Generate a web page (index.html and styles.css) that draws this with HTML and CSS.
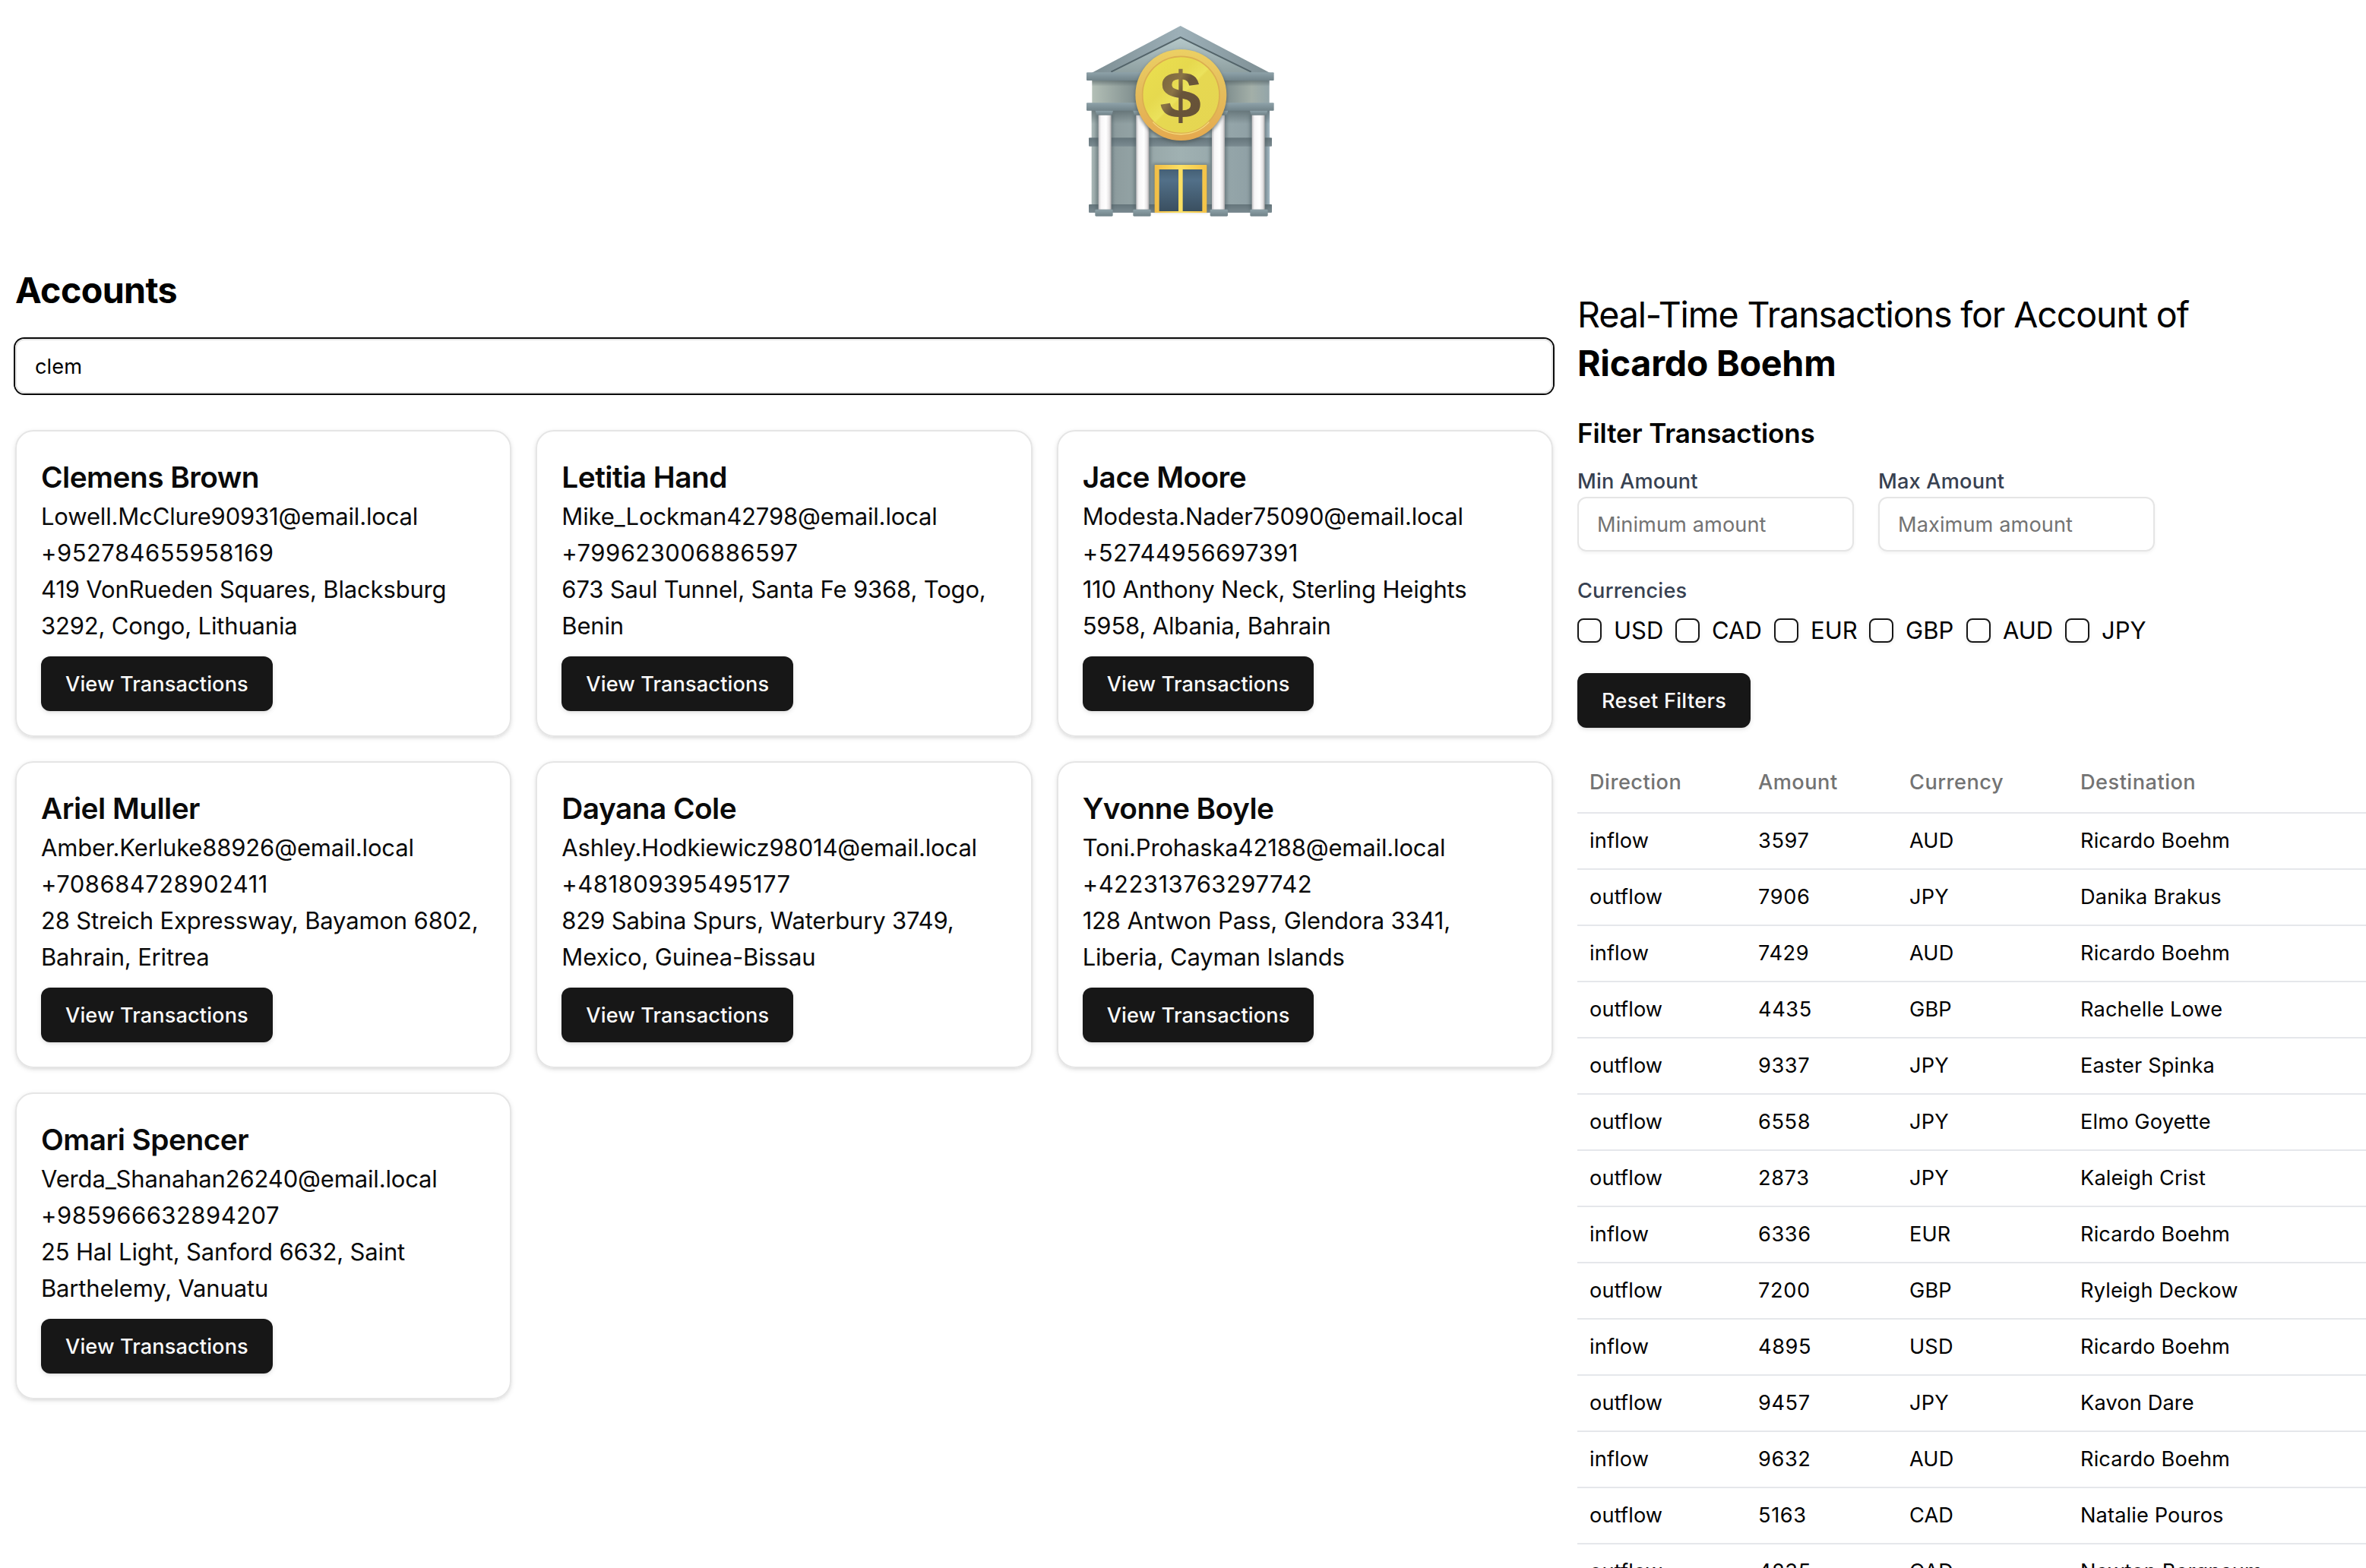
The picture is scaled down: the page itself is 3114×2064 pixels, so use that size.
FILE: index.html
```
<!DOCTYPE html>
<html lang="en">
<head>
<meta charset="utf-8">
<title>Accounts</title>
<link rel="stylesheet" href="styles.css">
</head>
<body>
<header class="hero">
  <svg class="bank" viewBox="81 30 760 780" role="img" aria-label="Bank">
    <defs>
      <linearGradient id="wall" x1="0" x2="1" y1="0" y2="0"><stop offset="0" stop-color="#a7b5b4"/><stop offset=".12" stop-color="#8d9c9e"/><stop offset=".5" stop-color="#a0b1b2"/><stop offset=".9" stop-color="#8fa0a5"/><stop offset="1" stop-color="#a2b7c2"/></linearGradient>
      <linearGradient id="frieze" x1="0" x2="1" y1="0" y2="0"><stop offset="0" stop-color="#b3bfb6"/><stop offset=".25" stop-color="#7f8e8e"/><stop offset=".75" stop-color="#7f8e8e"/><stop offset=".9" stop-color="#a3afa8"/><stop offset="1" stop-color="#93a5a9"/></linearGradient>
      <linearGradient id="shade" x1="0" x2="0" y1="0" y2="1"><stop offset="0" stop-color="#4d5c60" stop-opacity=".65"/><stop offset=".5" stop-color="#4d5c60" stop-opacity="0"/></linearGradient>
      <linearGradient id="ledge" x1="0" x2="0" y1="0" y2="1"><stop offset="0" stop-color="#8ea2a9"/><stop offset="1" stop-color="#718389"/></linearGradient>
      <linearGradient id="band" x1="0" x2="0" y1="0" y2="1"><stop offset="0" stop-color="#65757b"/><stop offset="1" stop-color="#7b8b91"/></linearGradient>
      <linearGradient id="roof" x1="0" x2="1" y1="0" y2="0"><stop offset="0" stop-color="#7d8e93"/><stop offset=".5" stop-color="#9db0b8"/><stop offset="1" stop-color="#7d8e93"/></linearGradient>
      <linearGradient id="gable" x1="0" x2="0" y1="0" y2="1"><stop offset="0" stop-color="#b6c9cb"/><stop offset="1" stop-color="#8fa0a1"/></linearGradient>
      <linearGradient id="column" x1="0" x2="1" y1="0" y2="0"><stop offset="0" stop-color="#c4c2c4"/><stop offset=".2" stop-color="#f7f6f7"/><stop offset=".6" stop-color="#ffffff"/><stop offset=".85" stop-color="#e3e1e2"/><stop offset="1" stop-color="#a9a7a8"/></linearGradient>
      <linearGradient id="rim" x1="0" x2="0" y1="0" y2="1"><stop offset="0" stop-color="#ecd063"/><stop offset=".45" stop-color="#e5bd5c"/><stop offset="1" stop-color="#e5a94f"/></linearGradient>
      <linearGradient id="face" x1="0" x2="1" y1="0" y2="1"><stop offset="0" stop-color="#ebe04f"/><stop offset=".35" stop-color="#e6d94e"/><stop offset=".5" stop-color="#ebe25c"/><stop offset=".52" stop-color="#e6d851"/><stop offset="1" stop-color="#e5d552"/></linearGradient>
      <linearGradient id="dollar" x1="0" x2="1" y1="0" y2="1"><stop offset="0" stop-color="#745f37"/><stop offset=".38" stop-color="#8a7446"/><stop offset=".5" stop-color="#69553a"/><stop offset="1" stop-color="#655136"/></linearGradient>
      <linearGradient id="frame" x1="0" x2="1" y1="0" y2="0"><stop offset="0" stop-color="#f2bd45"/><stop offset=".5" stop-color="#fbe063"/><stop offset="1" stop-color="#f4c247"/></linearGradient>
      <linearGradient id="glass" x1="0" x2="0" y1="0" y2="1"><stop offset="0" stop-color="#456075"/><stop offset=".25" stop-color="#527089"/><stop offset="1" stop-color="#3a4f60"/></linearGradient>
      <filter id="soft" x="-20%" y="-20%" width="140%" height="140%"><feGaussianBlur stdDeviation="7"/></filter>
    </defs>
    <path d="M110 228 461 42 815 228Z" fill="url(#roof)"/>
    <path d="M185 226 461 86 742 226Z" fill="url(#gable)"/>
    <path d="M187 224 461 87 740 224" fill="none" stroke="#53646a" stroke-width="6"/>
    <rect x="112" y="250" width="700" height="110" fill="url(#frieze)"/>
    <rect x="112" y="256" width="700" height="50" fill="url(#shade)"/>
    <rect x="110" y="374" width="703" height="406" fill="url(#wall)"/>
    <rect x="110" y="374" width="703" height="110" fill="url(#shade)"/>
    <rect x="99" y="484" width="723" height="34" rx="3" fill="url(#band)"/>
    <rect x="99" y="747" width="723" height="33" rx="3" fill="url(#band)"/>
    <g fill="#4c5b60" opacity=".55" filter="url(#soft)">
      <rect x="128" y="390" width="66" height="380"/><rect x="278" y="390" width="66" height="380"/>
      <rect x="578" y="390" width="66" height="380"/><rect x="735" y="390" width="66" height="380"/>
      <rect x="352" y="586" width="220" height="190"/>
    </g>
    <rect x="90" y="226" width="740" height="32" rx="3" fill="url(#ledge)"/>
    <rect x="90" y="346" width="740" height="31" rx="3" fill="url(#ledge)"/>
    <g fill="url(#ledge)">
      <path d="M125 377h70l-5 17h-60zM274 377h70l-5 17h-60zM579 377h70l-5 17h-60zM735 377h70l-5 17h-60z"/>
      <rect x="124" y="767" width="70" height="27" rx="4"/><rect x="274" y="767" width="70" height="27" rx="4"/>
      <rect x="578" y="767" width="70" height="27" rx="4"/><rect x="736" y="767" width="70" height="27" rx="4"/>
    </g>
    <rect x="137" y="395" width="51" height="372" fill="url(#column)"/>
    <rect x="286" y="395" width="51" height="372" fill="url(#column)"/>
    <rect x="585" y="395" width="51" height="372" fill="url(#column)"/>
    <rect x="743" y="395" width="51" height="372" fill="url(#column)"/>
    <rect x="359" y="591" width="206" height="189" rx="2" fill="url(#frame)"/>
    <rect x="377" y="609" width="76" height="165" fill="url(#glass)"/>
    <rect x="470" y="609" width="77" height="165" fill="url(#glass)"/>
    <circle cx="463" cy="322" r="181" fill="#4d5858" opacity=".7" filter="url(#soft)"/>
    <circle cx="463" cy="315" r="180" fill="url(#rim)"/>
    <circle cx="463" cy="315" r="152" fill="url(#face)" stroke="#dcae50" stroke-width="5"/>
    <path d="M352 422A152 152 0 0 0 574 422" fill="none" stroke="#f6dc7c" stroke-width="4"/>
    <text class="bank-sign" transform="translate(461 407) scale(1.13 1)" text-anchor="middle" fill="url(#dollar)">$</text>
  </svg>
</header>
<main class="layout">
  <section class="accounts">
    <h1 class="accounts-title">Accounts</h1>
    <input class="field search" type="text" value="clem" aria-label="Search accounts">
    <div class="cards">
      <article class="card"><h2 class="name">Clemens Brown</h2><p>Lowell.McClure90931@email.local</p><p class="phone">+952784655958169</p><p>419 VonRueden Squares, Blacksburg 3292, Congo, Lithuania</p><button class="btn">View Transactions</button></article>
      <article class="card"><h2 class="name">Letitia Hand</h2><p>Mike_Lockman42798@email.local</p><p class="phone">+799623006886597</p><p>673 Saul Tunnel, Santa Fe 9368, Togo, Benin</p><button class="btn">View Transactions</button></article>
      <article class="card"><h2 class="name">Jace Moore</h2><p>Modesta.Nader75090@email.local</p><p class="phone">+52744956697391</p><p>110 Anthony Neck, Sterling Heights 5958, Albania, Bahrain</p><button class="btn">View Transactions</button></article>
      <article class="card"><h2 class="name">Ariel Muller</h2><p>Amber.Kerluke88926@email.local</p><p class="phone">+708684728902411</p><p>28 Streich Expressway, Bayamon 6802, Bahrain, Eritrea</p><button class="btn">View Transactions</button></article>
      <article class="card"><h2 class="name">Dayana Cole</h2><p>Ashley.Hodkiewicz98014@email.local</p><p class="phone">+481809395495177</p><p>829 Sabina Spurs, Waterbury 3749, Mexico, Guinea-Bissau</p><button class="btn">View Transactions</button></article>
      <article class="card"><h2 class="name">Yvonne Boyle</h2><p>Toni.Prohaska42188@email.local</p><p class="phone">+422313763297742</p><p>128 Antwon Pass, Glendora 3341, Liberia, Cayman Islands</p><button class="btn">View Transactions</button></article>
      <article class="card"><h2 class="name">Omari Spencer</h2><p>Verda_Shanahan26240@email.local</p><p class="phone">+985966632894207</p><p>25 Hal Light, Sanford 6632, Saint Barthelemy, Vanuatu</p><button class="btn">View Transactions</button></article>
    </div>
  </section>
  <section class="transactions">
    <h2 class="heading">Real-Time Transactions for Account of<br><strong>Ricardo Boehm</strong></h2>
    <h3 class="subheading">Filter Transactions</h3>
    <div class="amounts">
      <label class="label">Min Amount<input class="field" type="text" placeholder="Minimum amount"></label>
      <label class="label">Max Amount<input class="field" type="text" placeholder="Maximum amount"></label>
    </div>
    <div class="label">Currencies</div>
    <div class="currencies">
      <label class="currency"><span class="box"></span>USD</label>
      <label class="currency"><span class="box"></span>CAD</label>
      <label class="currency"><span class="box"></span>EUR</label>
      <label class="currency"><span class="box"></span>GBP</label>
      <label class="currency"><span class="box"></span>AUD</label>
      <label class="currency"><span class="box"></span>JPY</label>
    </div>
    <button class="btn btn-reset">Reset Filters</button>
    <table class="table">
      <colgroup><col class="c-dir"><col class="c-amt"><col class="c-cur"><col></colgroup>
      <thead><tr><th>Direction</th><th>Amount</th><th>Currency</th><th>Destination</th></tr></thead>
      <tbody>
        <tr><td>inflow</td><td>3597</td><td>AUD</td><td>Ricardo Boehm</td></tr>
        <tr><td>outflow</td><td>7906</td><td>JPY</td><td>Danika Brakus</td></tr>
        <tr><td>inflow</td><td>7429</td><td>AUD</td><td>Ricardo Boehm</td></tr>
        <tr><td>outflow</td><td>4435</td><td>GBP</td><td>Rachelle Lowe</td></tr>
        <tr><td>outflow</td><td>9337</td><td>JPY</td><td>Easter Spinka</td></tr>
        <tr><td>outflow</td><td>6558</td><td>JPY</td><td>Elmo Goyette</td></tr>
        <tr><td>outflow</td><td>2873</td><td>JPY</td><td>Kaleigh Crist</td></tr>
        <tr><td>inflow</td><td>6336</td><td>EUR</td><td>Ricardo Boehm</td></tr>
        <tr><td>outflow</td><td>7200</td><td>GBP</td><td>Ryleigh Deckow</td></tr>
        <tr><td>inflow</td><td>4895</td><td>USD</td><td>Ricardo Boehm</td></tr>
        <tr><td>outflow</td><td>9457</td><td>JPY</td><td>Kavon Dare</td></tr>
        <tr><td>inflow</td><td>9632</td><td>AUD</td><td>Ricardo Boehm</td></tr>
        <tr><td>outflow</td><td>5163</td><td>CAD</td><td>Natalie Pouros</td></tr>
        <tr><td>outflow</td><td>4235</td><td>CAD</td><td>Newton Bergnaum</td></tr>
      </tbody>
    </table>
  </section>
</main>
</body>
</html>
```
FILE: styles.css
```
* { box-sizing: border-box; margin: 0; padding: 0; }
html, body { height: 2064px; overflow: hidden; }
body {
  background: #fff;
  color: #000;
  font-family: Inter, "Liberation Sans", sans-serif;
  font-size: 31px;
  line-height: 48px;
}

.hero { display: flex; justify-content: center; height: 350px; padding: 30px 6px 0 0; }
.bank { width: 253.33px; height: 260px; }
.bank-sign { font: 700 262px "Liberation Sans", Arial, sans-serif; }

.layout { display: grid; grid-template-columns: 2024px 1fr; column-gap: 32px; padding-left: 20px; }

.accounts-title { font-size: 46.6px; line-height: 64px; font-weight: 700; letter-spacing: -.61px; margin-bottom: 32px; }

.field {
  display: block;
  width: 100%;
  height: 72px;
  padding: 0 24px;
  border: 2px solid #e5e5e5;
  border-radius: 12px;
  background: transparent;
  box-shadow: 0 2px 4px rgba(0, 0, 0, .05);
  color: #000;
  font: 400 27.2px Inter, "Liberation Sans", sans-serif;
  letter-spacing: .07px;
  outline: none;
}
.field::placeholder { color: #737373; opacity: 1; }
.search { margin-bottom: 48px; box-shadow: 0 0 0 2px #0a0a0a; }

.cards { display: grid; grid-template-columns: repeat(3, 1fr); gap: 32px; }
.card {
  height: 404px;
  padding: 32px;
  border: 2px solid #e5e5e5;
  border-radius: 24px;
  color: #0a0a0a;
  letter-spacing: -.16px;
  box-shadow: 0 2px 6px rgba(0, 0, 0, .1), 0 2px 4px -2px rgba(0, 0, 0, .1);
}
.name { font-size: 38.8px; line-height: 56px; font-weight: 600; letter-spacing: -.52px; }
.phone { letter-spacing: .46px; }

.btn {
  display: block;
  height: 72px;
  padding: 0 32px;
  border: 0;
  border-radius: 12px;
  background: #171717;
  color: #fafafa;
  font: 500 27.2px Inter, "Liberation Sans", sans-serif;
  letter-spacing: .1px;
  box-shadow: 0 2px 6px rgba(0, 0, 0, .1), 0 2px 4px -2px rgba(0, 0, 0, .1);
}
.card .btn { margin-top: 16px; }
.btn-reset { letter-spacing: .27px; margin-bottom: 32px; }

.transactions { padding-top: 32px; overflow: hidden; }
.heading { font-size: 46.6px; line-height: 64px; font-weight: 400; letter-spacing: -1.14px; margin-bottom: 32px; }
.heading strong { font-weight: 700; letter-spacing: -.25px; }
.subheading { font-size: 35px; line-height: 56px; font-weight: 600; letter-spacing: -.08px; margin-bottom: 16px; }
.label { display: block; color: #374151; font-size: 27.2px; line-height: 40px; font-weight: 500; letter-spacing: .17px; }
.amounts { display: grid; grid-template-columns: 364px 364px; gap: 32px; margin-bottom: 32px; }

.currencies {
  display: grid;
  grid-template-columns: 129px 130px 125px 128px 130px auto;
  margin: 8px 0 32px;
}
.currency { display: flex; align-items: center; gap: 16px; }
.box {
  width: 32px;
  height: 32px;
  border: 2px solid #171717;
  border-radius: 8px;
  box-shadow: 0 2px 4px rgba(0, 0, 0, .08);
}

.table { width: 100%; table-layout: fixed; border-spacing: 0; font-size: 27.2px; line-height: 40px; letter-spacing: .13px; }
.c-dir { width: 222px; }
.c-amt { width: 199px; }
.c-cur { width: 225px; }
.table th {
  height: 81px;
  padding: 0 16px;
  border-bottom: 2px solid #e5e7eb;
  color: #737373;
  font-weight: 500;
  letter-spacing: .47px;
  text-align: left;
}
.table td { padding: 16px; border-bottom: 2px solid #e5e7eb; }
.table td:nth-child(2) { letter-spacing: .6px; }
```
